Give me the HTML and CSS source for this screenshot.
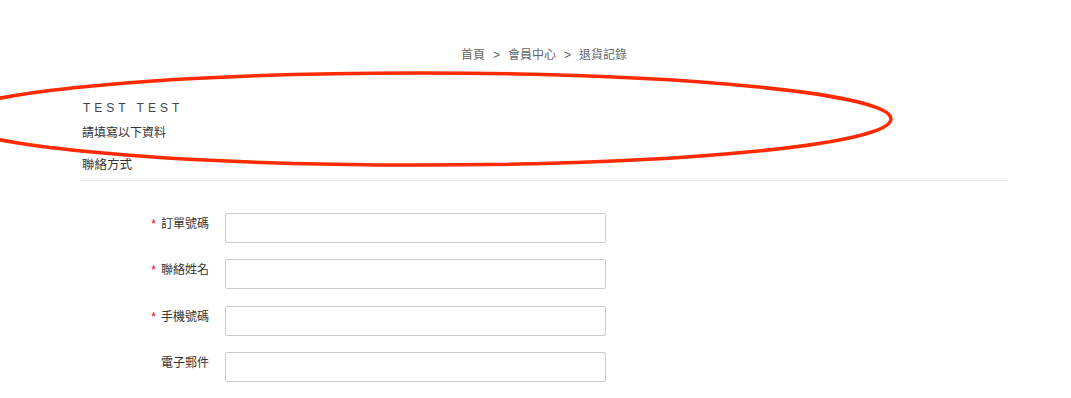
FILE: index.html
```html
<!DOCTYPE html>
<html lang="zh-Hant">
<head>
<meta charset="utf-8">
<title>退貨記錄</title>
<link rel="stylesheet" href="styles.css">
</head>
<body>
<div class="page">
  <nav class="crumbs">
    <span>首頁</span><span class="sep">&gt;</span><span>會員中心</span><span class="sep">&gt;</span><span>退貨記錄</span>
  </nav>
  <div class="name">TEST TEST</div>
  <div class="hint">請填寫以下資料</div>
  <h2 class="section">聯絡方式</h2>
  <form class="form">
    <div class="row">
      <label class="label"><span class="req">*</span>訂單號碼</label>
      <input class="field" type="text">
    </div>
    <div class="row">
      <label class="label"><span class="req">*</span>聯絡姓名</label>
      <input class="field" type="text">
    </div>
    <div class="row">
      <label class="label"><span class="req">*</span>手機號碼</label>
      <input class="field" type="text">
    </div>
    <div class="row">
      <label class="label">電子郵件</label>
      <input class="field" type="text">
    </div>
  </form>
</div>
<svg class="mark" width="1071" height="398" viewBox="0 0 1071 398" aria-hidden="true">
  <ellipse cx="420" cy="119" rx="471" ry="46" fill="none" stroke="#ff2a00" stroke-width="3.5"/>
</svg>
</body>
</html>
```
FILE: styles.css
```css
html, body {
  margin: 0;
  padding: 0;
  background: #fff;
}
body {
  font-family: "Liberation Sans", "Noto Sans CJK TC", sans-serif;
  color: #333;
  position: relative;
  width: 1071px;
  height: 398px;
  overflow: hidden;
}
.page {
  width: 928px;
  margin-left: 80px;
  padding-top: 46px;
}
.crumbs {
  display: flex;
  justify-content: center;
  font-size: 12px;
  line-height: 18px;
  color: #666;
}
.crumbs .sep {
  margin: 0 8px;
}
.name {
  margin-top: 35px;
  padding-left: 3px;
  font-size: 12px;
  line-height: 18px;
  letter-spacing: 4px;
  color: #444;
}
.hint {
  margin-top: 7px;
  padding-left: 2px;
  font-size: 12px;
  line-height: 18px;
  color: #333;
}
.section {
  margin: 13px 0 0;
  padding: 0 0 5px 2px;
  font-size: 12.5px;
  line-height: 20px;
  font-weight: normal;
  color: #333;
  border-bottom: 1px solid #e6e6e6;
}
.form {
  margin-top: 32px;
  display: flex;
  flex-direction: column;
  gap: 16.4px;
}
.row {
  display: flex;
  align-items: flex-start;
  gap: 16px;
}
.label {
  width: 129px;
  text-align: right;
  font-size: 12px;
  line-height: 18px;
  padding-top: 2px;
  color: #333;
}
.req {
  color: #e60012;
  margin-right: 5px;
}
.field {
  box-sizing: border-box;
  width: 381px;
  height: 30px;
  margin: 0;
  border: 1px solid #ccc;
  border-radius: 2px;
  background: #fff;
}
.mark {
  position: absolute;
  left: 0;
  top: 0;
  pointer-events: none;
}
```
